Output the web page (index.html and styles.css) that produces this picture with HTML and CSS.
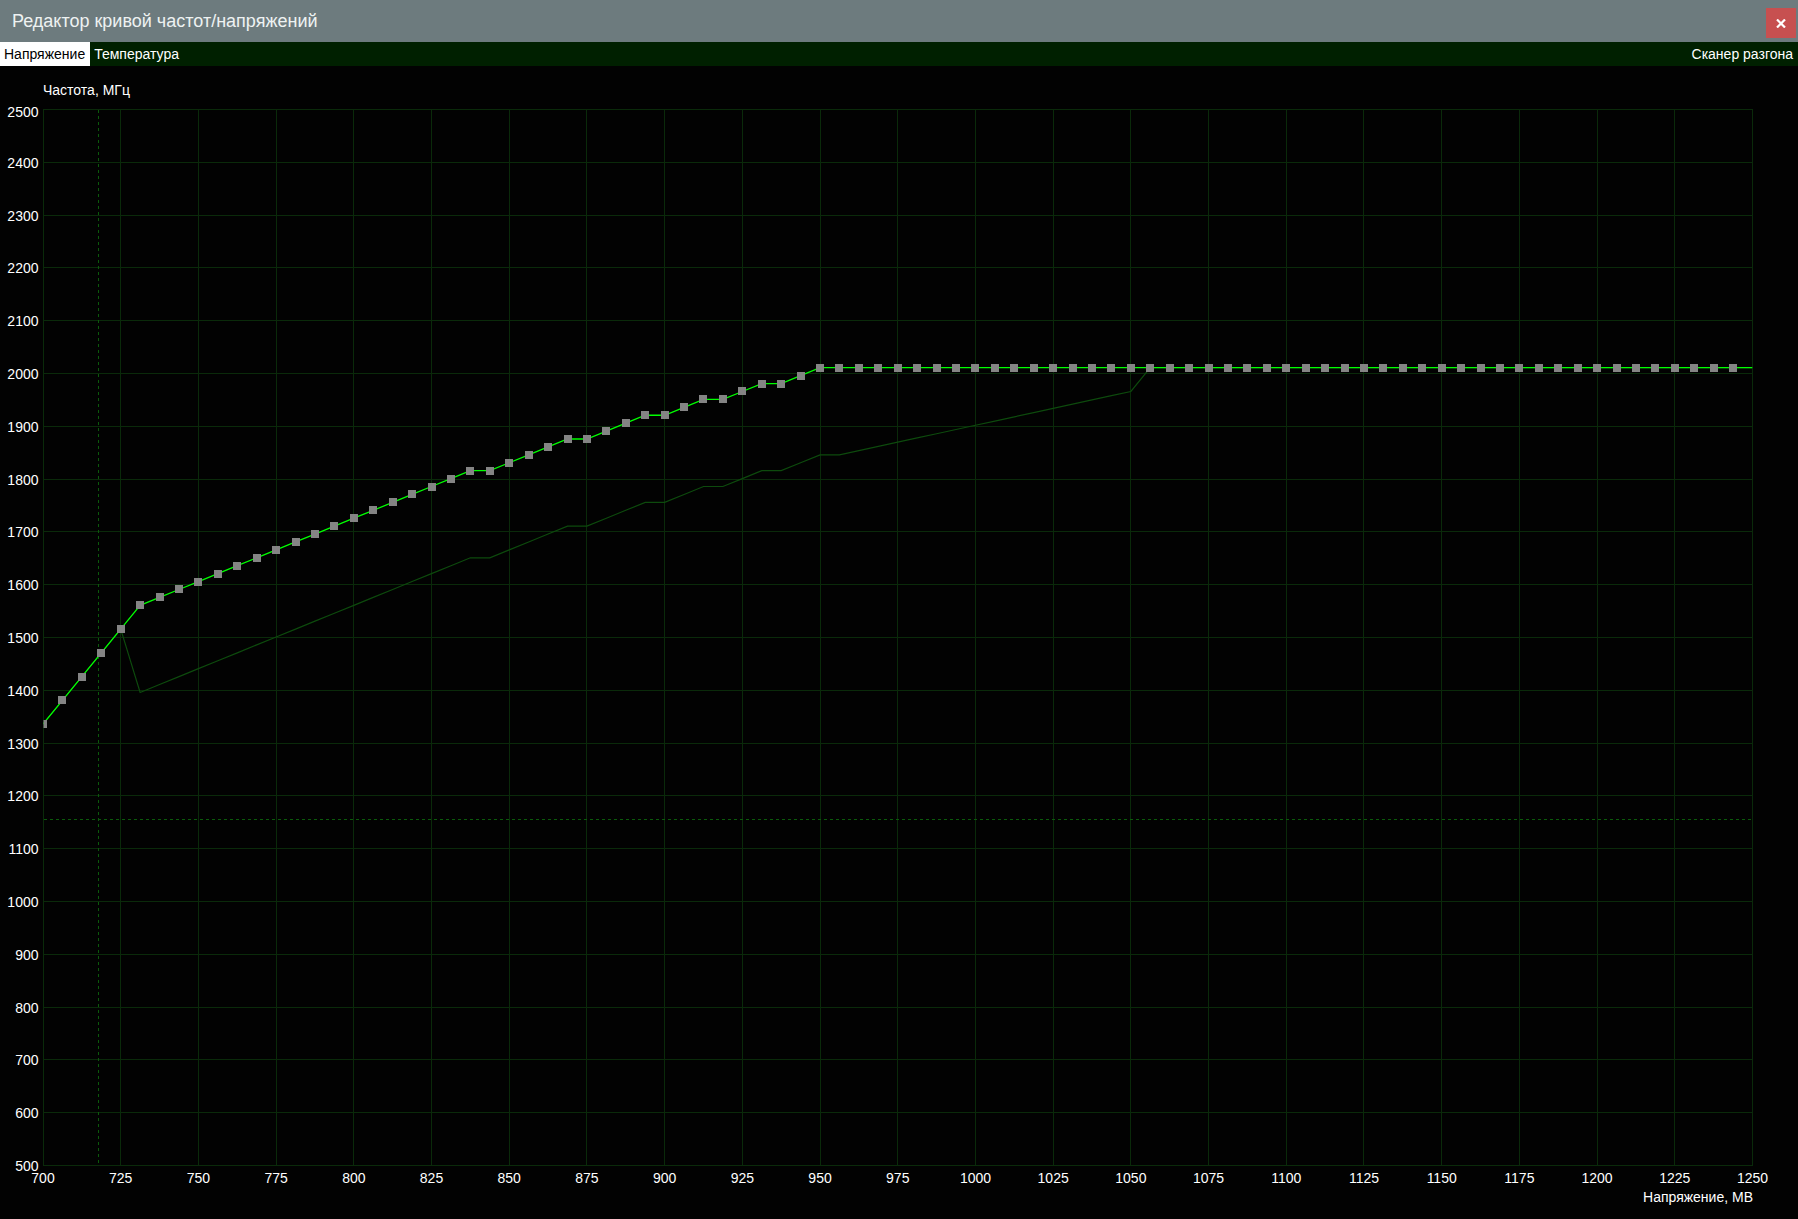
FILE: index.html
```html
<!DOCTYPE html>
<html lang="ru">
<head>
<meta charset="utf-8">
<title>Редактор кривой частот/напряжений</title>
<link rel="stylesheet" href="styles.css">
</head>
<body>
<div class="window">
  <header class="titlebar">
    <span class="title">Редактор кривой частот/напряжений</span>
    <button class="close" aria-label="Закрыть">
      <svg width="10" height="9" viewBox="0 0 10 9"><path d="M1 0.5 L9 8.5 M9 0.5 L1 8.5" stroke="#fff" stroke-width="2.2" fill="none"/></svg>
    </button>
  </header>
  <nav class="tabbar">
    <span class="tab active">Напряжение</span>
    <span class="tab">Температура</span>
    <span class="spacer"></span>
    <span class="tab right">Сканер разгона</span>
  </nav>
  <main class="chart">
    <svg id="plot" class="plot" width="1798" height="1153" viewBox="0 0 1798 1153">
      <text class="axis-title" x="43" y="29">Частота, МГц</text>
      <text class="axis-title" x="1753" y="1136" text-anchor="end">Напряжение, МВ</text>
    </svg>
  </main>
</div>
<script src="script.js"></script>
</body>
</html>
```

FILE: styles.css
```css
* { box-sizing: border-box; }
html, body {
  margin: 0;
  padding: 0;
  background: #020202;
}
body {
  width: 1798px;
  height: 1219px;
  overflow: hidden;
  font-family: "Liberation Sans", Arial, sans-serif;
}
.window {
  display: flex;
  flex-direction: column;
  height: 1219px;
}
.titlebar {
  height: 42px;
  flex: none;
  background: #6d7b7e;
  display: flex;
  align-items: flex-start;
  padding-left: 12px;
}
.title {
  color: #eef2f2;
  font-size: 18px;
  line-height: 42px;
}
.close {
  margin-left: auto;
  margin-top: 8px;
  margin-right: 2px;
  width: 30px;
  height: 30px;
  background: #c75050;
  border: 0;
  padding: 0;
  display: flex;
  align-items: center;
  justify-content: center;
}
.tabbar {
  height: 24px;
  flex: none;
  background: #002000;
  display: flex;
  font-size: 14px;
}
.tab {
  padding: 0 5px 0 4px;
  line-height: 24px;
  color: #fff;
  white-space: nowrap;
}
.tab.active {
  background: #fff;
  color: #000;
}
.tab.right {
  padding: 0 5px 0 4px;
}
.spacer { flex: 1; }
.chart {
  flex: 1;
  background: #020202;
}
.plot { display: block; }
.axis-title, .tick {
  font-family: "Liberation Sans", Arial, sans-serif;
  font-size: 14px;
  fill: #ffffff;
}
.grid line {
  stroke: #0a2a0a;
  stroke-width: 1;
  shape-rendering: crispEdges;
}
.guide {
  stroke: #0b5a0b;
  stroke-width: 1;
  stroke-dasharray: 3 3;
  shape-rendering: crispEdges;
}
.curve-stock {
  fill: none;
  stroke: #0d4a0d;
  stroke-width: 1.2;
}
.curve {
  fill: none;
  stroke: #00ff00;
  stroke-width: 1.3;
}
.marker {
  fill: #848484;
  shape-rendering: crispEdges;
}
```

FILE: script.js
```js
(function () {
  var NS = 'http://www.w3.org/2000/svg';
  var svg = document.getElementById('plot');
  var L = 43, W = 1709.5, T = 43, H = 1056;

  function X(mv) { return L + (mv - 700) / 550 * W; }
  function Y(f) { return T + (2500 - f) / 2000 * H; }
  function cx(mv) { return Math.floor(X(mv)) + 0.5; }
  function cy(f) { return Math.round(Y(f)) + 0.5; }

  function el(tag, attrs, parent) {
    var e = document.createElementNS(NS, tag);
    for (var k in attrs) e.setAttribute(k, attrs[k]);
    (parent || svg).appendChild(e);
    return e;
  }

  var left = cx(700), right = cx(1250), top = cy(2500), bottom = cy(500);

  // clip
  var defs = el('defs', {});
  var cp = el('clipPath', { id: 'area' }, defs);
  el('rect', { x: left, y: top, width: right - left, height: bottom - top }, cp);

  // grid
  var grid = el('g', { 'class': 'grid' });
  for (var f = 500; f <= 2500; f += 100) {
    el('line', { x1: left - 0.5, x2: right + 0.5, y1: cy(f), y2: cy(f) }, grid);
  }
  for (var mv = 700; mv <= 1250; mv += 25) {
    el('line', { x1: cx(mv), x2: cx(mv), y1: top - 0.5, y2: bottom + 0.5 }, grid);
  }

  // guides
  el('line', { 'class': 'guide', x1: 98.5, x2: 98.5, y1: top, y2: bottom });
  el('line', { 'class': 'guide', x1: left, x2: right, y1: 753.5, y2: 753.5 });

  // tick labels
  for (f = 500; f <= 2500; f += 100) {
    var ty = Math.max(cy(f) + 5, 51);
    var t = el('text', { 'class': 'tick', x: 38.5, y: ty, 'text-anchor': 'end' });
    t.textContent = String(f);
  }
  for (mv = 700; mv <= 1250; mv += 25) {
    var tx = el('text', { 'class': 'tick', x: X(mv), y: 1117, 'text-anchor': 'middle' });
    tx.textContent = String(mv);
  }

  // data
  var head = [1335, 1380, 1425, 1470, 1515];
  var cur = head.concat([1560, 1575, 1590, 1605, 1620, 1635, 1650, 1665, 1680, 1695,
    1710, 1725, 1740, 1755, 1770, 1785, 1800, 1815, 1815, 1830, 1845, 1860, 1875,
    1875, 1890, 1905, 1920, 1920, 1935, 1950, 1950, 1965, 1980, 1980, 1995]);
  while (cur.length < 88) cur.push(2010);

  var stock = head.slice();
  for (var i = 5; i <= 22; i++) stock.push(1395 + (i - 5) * 15);
  stock = stock.concat([1650, 1665, 1680, 1695, 1710, 1710, 1725, 1740, 1755, 1755,
    1770, 1785, 1785, 1800, 1815, 1815, 1830, 1845, 1845]);
  for (i = 1; i <= 15; i++) stock.push(1845 + i * 8);
  while (stock.length < 88) stock.push(2010);

  var plotG = el('g', { 'clip-path': 'url(#area)' });

  function pts(arr) {
    var s = [];
    for (var j = 0; j < arr.length; j++) s.push(X(700 + j * 6.25).toFixed(2) + ',' + Y(arr[j]).toFixed(2));
    s.push(X(1250).toFixed(2) + ',' + Y(arr[arr.length - 1]).toFixed(2));
    return s.join(' ');
  }

  el('polyline', { 'class': 'curve-stock', points: pts(stock) }, plotG);
  el('polyline', { 'class': 'curve', points: pts(cur) }, plotG);

  for (i = 0; i < cur.length; i++) {
    var mx = Math.round(X(700 + i * 6.25) - 4);
    var my = Math.round(Y(cur[i]) - 4);
    el('rect', { 'class': 'marker', x: mx, y: my, width: 8, height: 8 }, plotG);
  }
})();
```
